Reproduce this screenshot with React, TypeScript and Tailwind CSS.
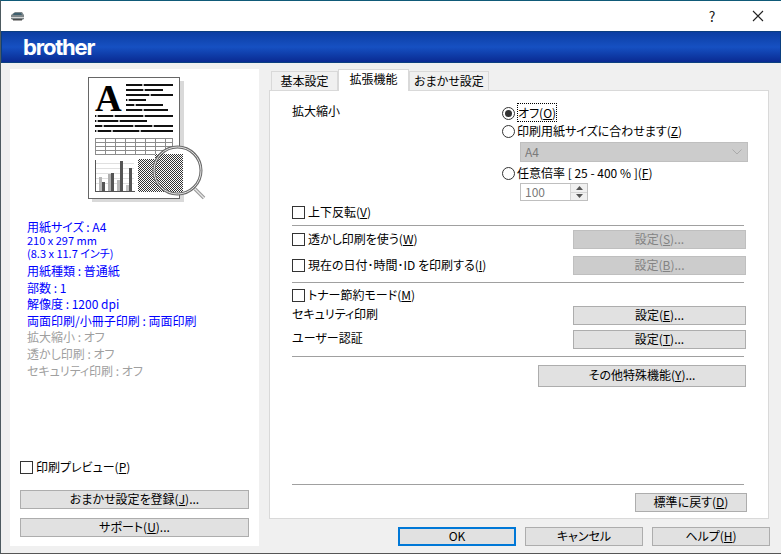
import React from "react";

const font = { fontFamily: '"Noto Sans CJK JP", "Noto Sans", sans-serif' };

function Btn({ w, h = "h-[19px]", disabled, primary, children }: { w: string; h?: string; disabled?: boolean; primary?: boolean; children: React.ReactNode }) {
  const tone = primary
    ? "border-2 border-[#0078d7] bg-[#e1e1e1] text-black"
    : disabled
      ? "border border-[#bfbfbf] bg-[#cccccc] text-[#838383]"
      : "border border-[#adadad] bg-[#e1e1e1] text-black";
  return <div className={`${w} ${h} ${tone} flex shrink-0 items-center justify-center pb-[2px] text-[12px] leading-none`}><span>{children}</span></div>;
}

function Check({ children }: { children: React.ReactNode }) {
  return (
    <div className="flex items-center gap-[3px] text-[12px] leading-none text-black">
      <span className="h-[13px] w-[13px] shrink-0 border border-[#333333] bg-white" />
      <span className="-mt-[2px]">{children}</span>
    </div>
  );
}

function Radio({ on, children }: { on?: boolean; children: React.ReactNode }) {
  return (
    <div className="flex h-[14px] items-center gap-[2px] text-[12px] leading-none text-black">
      <span className="flex h-[13px] w-[13px] shrink-0 items-center justify-center rounded-full border border-[#333333] bg-white">
        {on && <span className="h-[7px] w-[7px] rounded-full bg-[#333333]" />}
      </span>
      <span>{children}</span>
    </div>
  );
}

function Hr() {
  return <div className="h-px w-[452px] bg-[#a0a0a0]" />;
}

function Preview() {
  const rightLines = [[85, 173], [90, 163], [95, 173], [100, 146], [105, 163], [110, 168]];
  const fullLines = [[116, 173], [121, 147], [126, 173], [131, 173]];
  const ticks = [[142, 85], [143, 90], [149, 95], [127, 100], [134, 105], [142, 110], [96, 116], [113, 116], [143, 116], [96, 121], [118, 121], [102, 126], [133, 126], [152, 126], [96, 131], [111, 131], [139, 131]];
  const bars: [number, number, string][] = [
    [99, 177, "#b8b8b8"], [102, 182, "#555555"], [108, 174, "#b0b0b0"], [111, 173, "#555555"], [117, 180, "#b8b8b8"], [120, 161, "#555555"], [126, 185, "#c4c4c4"], [129, 168, "#555555"],
  ];
  return (
    <svg width="130" height="135" viewBox="80 70 130 135" className="block">
      <defs>
        <pattern id="chk" width="2" height="2" patternUnits="userSpaceOnUse">
          <rect width="2" height="2" fill="#ffffff" />
          <rect width="1" height="1" fill="#333333" />
          <rect x="1" y="1" width="1" height="1" fill="#333333" />
        </pattern>
      </defs>
      <rect x="92" y="81" width="92" height="121" fill="#d9d9d9" />
      <rect x="88.5" y="77.5" width="91" height="121" fill="#ffffff" stroke="#666666" />
      <text x="95" y="111" fontFamily='"Liberation Serif", serif' fontWeight="700" fontSize="37" fill="#000000">A</text>
      {rightLines.map(([y, e]) => <rect key={`r${y}`} x="126" y={y - 1} width={e - 126} height="2" fill="#111111" />)}
      {fullLines.map(([y, e]) => <rect key={`f${y}`} x="95" y={y - 1} width={e - 95} height="2" fill="#111111" />)}
      {ticks.map(([x, y], i) => <rect key={`t${i}`} x={x} y={y - 1} width="2" height="2" fill="#b0b0b0" />)}
      {[138, 142, 146, 150, 154].map((y) => <rect key={`h${y}`} x="95" y={y} width="78" height="1" fill="#8c8c8c" />)}
      {[95, 105, 115, 125, 135, 145, 155, 165, 172].map((x) => <rect key={`v${x}`} x={x} y="138" width="1" height="16" fill="#8c8c8c" />)}
      {[163, 168, 173, 178, 183].map((y) => <rect key={`g${y}`} x="96" y={y} width="38" height="1" fill="#e0e0e0" />)}
      {bars.map(([x, y, c]) => <rect key={`b${x}`} x={x} y={y} width="3" height={191 - y} fill={c} />)}
      <rect x="95" y="160" width="1" height="32" fill="#555555" />
      <rect x="95" y="191" width="40" height="1" fill="#555555" />
      <rect x="138" y="159" width="45" height="33" fill="url(#chk)" />
      <circle cx="177.5" cy="170.5" r="23.5" fill="#ffffff" />
      <rect x="155" y="154" width="28" height="38" fill="url(#chk)" />
      <line x1="195" y1="189" x2="204" y2="198" stroke="#9a9a9a" strokeWidth="3.5" />
      <line x1="195" y1="189" x2="204" y2="198" stroke="#e8e8e8" strokeWidth="1.2" />
      <circle cx="177.5" cy="170.5" r="23.5" fill="none" stroke="#6a6a6a" strokeWidth="3" />
      <circle cx="177.5" cy="170.5" r="23.5" fill="none" stroke="#e4e4e4" strokeWidth="1" />
    </svg>
  );
}

export default function App() {
  return (
    <div style={font} className="flex h-[554px] w-[781px] flex-col overflow-hidden border-b border-l border-t border-b-[#555555] border-l-[#4d5a60] border-t-[#0f5a78] bg-[#f0f0f0] [font-feature-settings:'palt']">
      <div className="flex h-[30px] shrink-0 items-center justify-between bg-white pl-[9px]">
        <svg width="15" height="10" viewBox="0 0 15 10">
          <path d="M1 4 L5 1 H12 L14 4 V8 L12 9 H3 L1 8Z" fill="#7d8689" />
          <path d="M4 2 H11 L12 4 H3Z" fill="#3f5f6e" />
          <path d="M1 6 H14 V7 H1Z" fill="#d6d6d6" />
          <path d="M3 8 H12 V9.5 H3Z" fill="#4a4a4a" />
        </svg>
        <div className="flex items-center">
          <span className="w-[46px] text-center text-[14px] leading-none text-[#222222]">?</span>
          <span className="flex w-[46px] items-center justify-center">
            <svg width="12" height="12" viewBox="0 0 12 12"><path d="M1 1 L11 11 M11 1 L1 11" stroke="#222222" strokeWidth="1.1" fill="none" /></svg>
          </span>
        </div>
      </div>
      <div className="flex h-[32px] shrink-0 items-center border border-[#0b3f80] bg-gradient-to-b from-[#0c3ea2] via-[#1650c2] to-[#0a2a92] pl-[21px]">
        <span className="text-[22px] font-bold leading-none tracking-[-1.2px] text-white" style={{ fontFamily: '"Inter", "Liberation Sans", sans-serif' }}>brother</span>
      </div>
      <div className="flex min-h-0 flex-1 gap-[10px] pb-[7px] pl-[9px] pr-[11px] pt-[6px]">
        <div className="flex w-[249px] shrink-0 flex-col bg-white pb-[9px] pl-[10px]">
          <div className="ml-[60px] mt-px"><Preview /></div>
          <div className="ml-[7px] mt-[14px] flex flex-col text-[12px] leading-[16.6px] text-[#0000ff]">
            <div className="leading-[15px]">用紙サイズ : A4</div>
            <div className="text-[11px] leading-[13px]">210 x 297 mm</div>
            <div className="mb-[3px] text-[11px] leading-[13px]">(8.3 x 11.7 インチ)</div>
            <div>用紙種類 : 普通紙</div>
            <div>部数 : 1</div>
            <div>解像度 : 1200 dpi</div>
            <div>両面印刷/小冊子印刷 : 両面印刷</div>
            <div className="text-[#a0a0a0]">拡大縮小 : オフ</div>
            <div className="text-[#a0a0a0]">透かし印刷 : オフ</div>
            <div className="text-[#a0a0a0]">セキュリティ印刷 : オフ</div>
          </div>
          <div className="flex-1" />
          <Check>印刷プレビュー(<u>P</u>)</Check>
          <div className="mt-[16px] flex flex-col gap-[9px]">
            <Btn w="w-[229px]">おまかせ設定を登録(<u>J</u>)...</Btn>
            <Btn w="w-[229px]">サポート(<u>U</u>)...</Btn>
          </div>
        </div>
        <div className="flex min-w-0 flex-1 flex-col">
          <div className="relative z-10 flex h-[21px] shrink-0 items-end pl-[2px] text-[12px] leading-none text-black">
            <div className="flex h-[19px] w-[67px] items-center justify-center border border-b-0 border-[#d9d9d9] bg-[#f0f0f0]">基本設定</div>
            <div className="-mb-px flex h-[22px] w-[71px] items-center justify-center border border-b-0 border-[#d9d9d9] bg-white pb-[3px]">拡張機能</div>
            <div className="flex h-[19px] w-[80px] items-center justify-center border border-b-0 border-[#d9d9d9] bg-[#f0f0f0]">おまかせ設定</div>
          </div>
          <div className="mr-px flex h-[429px] shrink-0 flex-col border border-[#d9d9d9] bg-white pl-[22px] text-[12px] leading-none text-black">
            <div className="flex h-[113px] pt-[15px]">
              <div className="-mt-px w-[210px]">拡大縮小</div>
              <div className="flex flex-col">
                <Radio on><span className="border border-dotted border-black">オフ(<u>O</u>)</span></Radio>
                <div className="mt-[4px]"><Radio>印刷用紙サイズに合わせます(<u>Z</u>)</Radio></div>
                <div className="ml-[18px] mt-[4px] flex h-[20px] w-[228px] items-center justify-between border border-[#bfbfbf] bg-[#cccccc] pl-[4px] pr-[5px] text-[#7a7a7a]">
                  A4
                  <svg width="10" height="6" viewBox="0 0 10 6"><path d="M0.5 0.5 L5 5 L9.5 0.5" stroke="#aaaaaa" fill="none" /></svg>
                </div>
                <div className="mt-[4px]"><Radio>任意倍率 [ 25 - 400 % ](<u>F</u>)</Radio></div>
                <div className="ml-[18px] mt-[3px] flex h-[18px] w-[68px] items-center justify-between border border-[#bfbfbf] bg-white pl-[4px] text-[#7a7a7a]">
                  100
                  <div className="flex h-full w-[17px] flex-col border-l border-[#d4d4d4] bg-[#f0f0f0]">
                    <div className="flex flex-1 items-center justify-center border-b border-[#d4d4d4]">
                      <svg width="7" height="4" viewBox="0 0 7 4"><path d="M3.5 0 L7 4 H0Z" fill="#555555" /></svg>
                    </div>
                    <div className="flex flex-1 items-center justify-center">
                      <svg width="7" height="4" viewBox="0 0 7 4"><path d="M3.5 4 L7 0 H0Z" fill="#555555" /></svg>
                    </div>
                  </div>
                </div>
              </div>
            </div>
            <div className="mt-[2px]"><Check>上下反転(<u>V</u>)</Check></div>
            <div className="mt-[6px]"><Hr /></div>
            <div className="mt-[4px] flex w-[454px] items-center justify-between">
              <Check>透かし印刷を使う(<u>W</u>)</Check>
              <Btn w="w-[173px]" disabled>設定(<u>S</u>)...</Btn>
            </div>
            <div className="mt-[7px] flex w-[454px] items-center justify-between">
              <Check>現在の日付･時間･ID を印刷する(<u>I</u>)</Check>
              <Btn w="w-[173px]" disabled>設定(<u>B</u>)...</Btn>
            </div>
            <div className="mt-[7px]"><Hr /></div>
            <div className="mt-[6px]"><Check>トナー節約モード(<u>M</u>)</Check></div>
            <div className="mt-[4px] flex w-[454px] items-center justify-between">
              <span className="-mt-[3px]">セキュリティ印刷</span>
              <Btn w="w-[173px]">設定(<u>E</u>)...</Btn>
            </div>
            <div className="mt-[5px] flex w-[454px] items-center justify-between">
              <span className="-mt-[3px]">ユーザー認証</span>
              <Btn w="w-[173px]">設定(<u>T</u>)...</Btn>
            </div>
            <div className="mt-[7px]"><Hr /></div>
            <div className="mt-[8px] flex w-[454px] justify-end">
              <Btn w="w-[208px]" h="h-[22px]">その他特殊機能(<u>Y</u>)...</Btn>
            </div>
            <div className="mt-[97px]"><Hr /></div>
            <div className="mt-[8px] flex w-[455px] justify-end">
              <Btn w="w-[112px]">標準に戻す(<u>D</u>)</Btn>
            </div>
          </div>
          <div className="mt-[8px] flex justify-end gap-[9px]">
            <Btn w="w-[118px]" primary>OK</Btn>
            <Btn w="w-[118px]">キャンセル</Btn>
            <Btn w="w-[118px]">ヘルプ(<u>H</u>)</Btn>
          </div>
        </div>
      </div>
    </div>
  );
}
